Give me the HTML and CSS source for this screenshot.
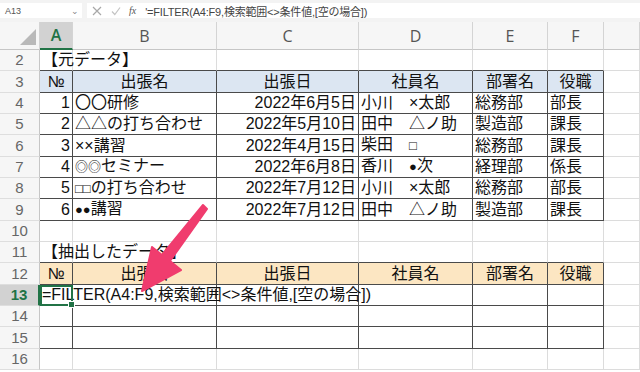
FILE: index.html
```html
<!DOCTYPE html>
<html>
<head>
  <meta charset="utf-8">
  <title>FILTER</title>
  <link rel="stylesheet" href="styles.css">
</head>
<body>

  <div class="fbar">
    <div class="namebox"><span>A13</span><span class="dd">&#8964;</span></div>
    <div class="finput">
      <svg class="ico" width="10" height="10" viewBox="0 0 10 10"><path d="M1 1L9 9M9 1L1 9" stroke="#a8a8a8" stroke-width="1.2" fill="none"/></svg>
      <svg class="ico" width="10" height="10" viewBox="0 0 10 10"><path d="M1 5.5L3.8 8.5L9 1.5" stroke="#c4c4c4" stroke-width="1.2" fill="none"/></svg>
      <span class="fx">fx</span>
      <span class="ftext">'=FILTER(A4:F9,検索範囲&lt;&gt;条件値,[空の場合])</span>
    </div>
  </div>

  <table class="sheet">
    <colgroup>
      <col style="width:40px"><col style="width:33px"><col style="width:144px"><col style="width:142px">
      <col style="width:114px"><col style="width:75px"><col style="width:56px"><col style="width:36px">
    </colgroup>
    <tr class="colhead">
      <td class="corner"><span class="tri"></span></td>
      <td class="sel">A</td><td>B</td><td>C</td><td>D</td><td>E</td><td>F</td><td></td>
    </tr>
    <tr>
      <td class="h">2</td>
      <td class="tb">【元データ】</td><td class="tb"></td><td class="tb"></td><td class="tb"></td><td class="tb"></td><td class="tb"></td><td></td>
    </tr>
    <tr>
      <td class="h">3</td>
      <td class="t blue c">№</td><td class="t blue c">出張名</td><td class="t blue c">出張日</td><td class="t blue c">社員名</td><td class="t blue c">部署名</td><td class="t blue c">役職</td><td></td>
    </tr>
    <tr>
      <td class="h">4</td>
      <td class="t r">1</td><td class="t">〇〇研修</td><td class="t r">2022年6月5日</td><td class="t">小川　×太郎</td><td class="t">総務部</td><td class="t">部長</td><td></td>
    </tr>
    <tr>
      <td class="h">5</td>
      <td class="t r">2</td><td class="t">△△の打ち合わせ</td><td class="t r">2022年5月10日</td><td class="t">田中　△ノ助</td><td class="t">製造部</td><td class="t">課長</td><td></td>
    </tr>
    <tr>
      <td class="h">6</td>
      <td class="t r">3</td><td class="t">××講習</td><td class="t r">2022年4月15日</td><td class="t">柴田　<span class="sm">□</span></td><td class="t">総務部</td><td class="t">課長</td><td></td>
    </tr>
    <tr>
      <td class="h">7</td>
      <td class="t r">4</td><td class="t"><span class="sm">◎◎</span>セミナー</td><td class="t r">2022年6月8日</td><td class="t">香川　<span class="sm">●</span>次</td><td class="t">経理部</td><td class="t">係長</td><td></td>
    </tr>
    <tr>
      <td class="h">8</td>
      <td class="t r">5</td><td class="t"><span class="sm">□□</span>の打ち合わせ</td><td class="t r">2022年7月12日</td><td class="t">小川　×太郎</td><td class="t">総務部</td><td class="t">部長</td><td></td>
    </tr>
    <tr>
      <td class="h">9</td>
      <td class="t r">6</td><td class="t"><span class="sm">●●</span>講習</td><td class="t r">2022年7月12日</td><td class="t">田中　△ノ助</td><td class="t">製造部</td><td class="t">課長</td><td></td>
    </tr>
    <tr>
      <td class="h">10</td>
      <td></td><td></td><td></td><td></td><td></td><td></td><td></td>
    </tr>
    <tr>
      <td class="h">11</td>
      <td class="tb">【抽出したデータ】</td><td class="tb"></td><td class="tb"></td><td class="tb"></td><td class="tb"></td><td class="tb"></td><td></td>
    </tr>
    <tr>
      <td class="h">12</td>
      <td class="t orange c">№</td><td class="t orange c">出張名</td><td class="t orange c">出張日</td><td class="t orange c">社員名</td><td class="t orange c">部署名</td><td class="t orange c">役職</td><td></td>
    </tr>
    <tr>
      <td class="h hsel">13</td>
      <td class="t active">=FILTER(A4:F9,検索範囲&lt;&gt;条件値,[空の場合])</td><td class="t"></td><td class="t"></td><td class="t"></td><td class="t"></td><td class="t"></td><td></td>
    </tr>
    <tr>
      <td class="h">14</td>
      <td class="t"></td><td class="t"></td><td class="t"></td><td class="t"></td><td class="t"></td><td class="t"></td><td></td>
    </tr>
    <tr>
      <td class="h">15</td>
      <td class="t"></td><td class="t"></td><td class="t"></td><td class="t"></td><td class="t"></td><td class="t"></td><td></td>
    </tr>
    <tr>
      <td class="h">16</td>
      <td></td><td></td><td></td><td></td><td></td><td></td><td></td>
    </tr>
  </table>

  <svg class="arrow" width="640" height="372" viewBox="0 0 640 372">
    <polygon points="207,209 170,261 181,270 142,291 152,247 162,255 203,205" fill="#f03c6e" stroke="#f03c6e" stroke-width="2" stroke-linejoin="round"/>
  </svg>

</body>
</html>
```

FILE: styles.css
```css
body {
  margin: 0;
  width: 640px;
  height: 372px;
  overflow: hidden;
  position: relative;
  background: #fff;
  font-family: "Liberation Sans", "Noto Sans CJK JP", sans-serif;
}

/* formula bar */
.fbar {
  height: 22px;
  box-sizing: border-box;
  padding-top: 3px;
  background: #f3f3f3;
  display: flex;
  align-items: flex-start;
}
.namebox {
  width: 82px;
  height: 15px;
  box-sizing: border-box;
  padding: 0 3px 0 5px;
  background: #fff;
  display: flex;
  align-items: center;
  justify-content: space-between;
  font-size: 9px;
  color: #555;
}
.namebox .dd {
  font-size: 9px;
  color: #888;
  line-height: 6px;
}
.finput {
  flex: 1;
  height: 15px;
  margin-left: 5px;
  background: #fff;
  display: flex;
  align-items: center;
}
.ico {
  margin-left: 5px;
  margin-right: 4px;
}
.fx {
  margin-left: 4px;
  font-family: "Liberation Serif", serif;
  font-style: italic;
  font-size: 10px;
  color: #555;
}
.ftext {
  margin-left: 9px;
  font-size: 11px;
  letter-spacing: -0.2px;
  color: #444;
  white-space: nowrap;
}

/* grid */
.sheet {
  table-layout: fixed;
  width: 640px;
  border-collapse: separate;
  border-spacing: 0;
}
.sheet td {
  box-sizing: border-box;
  height: 21.35px;
  padding: 0 2px;
  border-right: 1px solid #dcdcdc;
  border-bottom: 1px solid #dcdcdc;
  font-size: 16px;
  line-height: 18px;
  color: #111;
  white-space: nowrap;
  overflow: visible;
  vertical-align: middle;
}
.colhead td {
  height: 28px;
  background: #f6f6f6;
  border-right: 1px solid #d4d4d4;
  border-bottom: 1px solid #c6c6c6;
  text-align: center;
  font-family: "Open Sans", sans-serif;
  font-size: 16px;
  color: #555;
}
.colhead td.sel {
  background: #d2d2d2;
  color: #217346;
  font-weight: 600;
  border-bottom: 2px solid #217346;
}
.corner {
  position: relative;
}
.tri {
  position: absolute;
  right: 3px;
  bottom: 4px;
  width: 16px;
  height: 16px;
  background: #b9b9b9;
  clip-path: polygon(100% 0, 100% 100%, 0 100%);
}
.sheet td.h {
  background: #f6f6f6;
  border-right: 1px solid #c6c6c6;
  border-bottom: 1px solid #dedede;
  text-align: center;
  font-size: 15px;
  color: #666;
}
.sheet td.hsel {
  background: #d2d2d2;
  color: #217346;
  font-weight: bold;
  border-right: 2px solid #217346;
}

.sheet td.t {
  border-right-color: #4a4a4a;
  border-bottom-color: #4a4a4a;
}
.sheet td.tb {
  border-bottom-color: #4a4a4a;
}
.blue {
  background: #dce6f2;
}
.orange {
  background: #fce6c2;
}
.c {
  text-align: center;
}
.r {
  text-align: right;
}
.sm {
  font-size: 13px;
}

.sheet td.active {
  position: relative;
  outline: 2px solid #217346;
  outline-offset: -2px;
}
.active::after {
  content: "";
  position: absolute;
  right: -3px;
  bottom: -3px;
  width: 5px;
  height: 5px;
  background: #217346;
  border: 1px solid #fff;
}

.arrow {
  position: absolute;
  left: 0;
  top: 0;
  pointer-events: none;
}
```
